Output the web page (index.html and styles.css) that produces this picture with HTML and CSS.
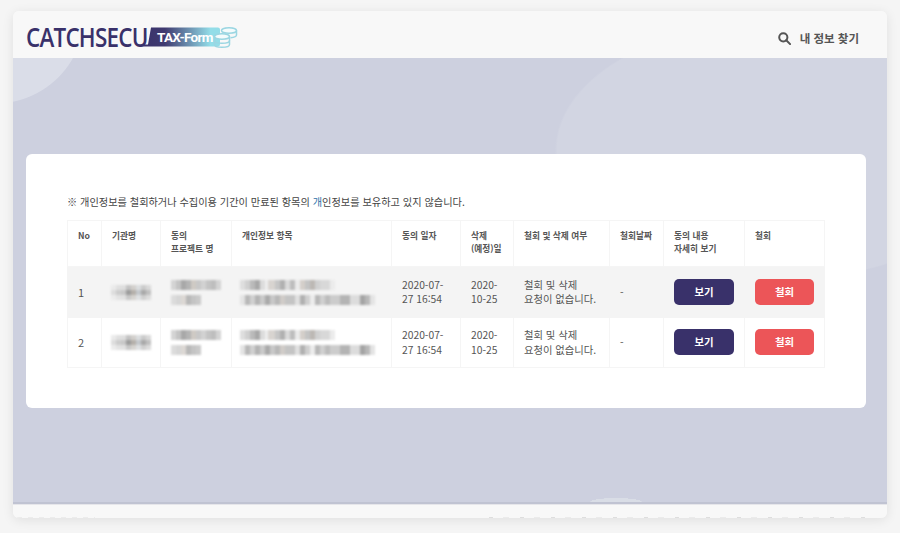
FILE: index.html
```html
<!DOCTYPE html>
<html lang="ko">
<head>
<meta charset="utf-8">
<title>CATCHSECU TAX-Form</title>
<link rel="stylesheet" href="styles.css">
</head>
<body>
<div class="frame">
  <header class="topbar">
    <svg class="logo" width="212" height="21" viewBox="0 0 212 21">
      <defs>
        <linearGradient id="band" x1="0" x2="1" y1="0" y2="0">
          <stop offset="0" stop-color="#39316a"/>
          <stop offset=".3" stop-color="#3f3a70"/>
          <stop offset=".88" stop-color="#93dde8"/>
          <stop offset="1" stop-color="#93dde8"/>
        </linearGradient>
      </defs>
      <path d="M125 0.500h67a2 2 0 0 1 2 2v15a2 2 0 0 1 -2 2h-77v-2h7z" fill="url(#band)"/>
      <text class="logo-word" x="0" y="19.500">CATCHSECU</text>
      <text class="logo-tag" x="131" y="15">TAX-Form</text>
      <g class="coins">
        <ellipse cx="203" cy="3.500" rx="7.500" ry="2.800"/>
        <path d="M210.500 3.500v4.500c0 1.400-2.500 2.500-6 2.800"/>
        <ellipse cx="196" cy="9.500" rx="7.500" ry="2.800"/>
        <path d="M188.500 9.500v8c0 1.600 3.400 2.800 7.500 2.800s7.500-1.200 7.500-2.800v-8"/>
        <path d="M188.500 13.500c0 1.600 3.400 2.800 7.500 2.800s7.500-1.200 7.500-2.800"/>
      </g>
    </svg>
    <a class="find">
      <svg width="13" height="13" viewBox="0 0 13 13" fill="none" stroke="#555" stroke-width="2">
        <circle cx="5.300" cy="5.300" r="4.100"/>
        <path d="M8.300 8.300l3.800 3.800" stroke-linecap="round"/>
      </svg>
      <span>내 정보 찾기</span>
    </a>
  </header>
  <main class="stage">
    <section class="card">
      <p class="notice">※ 개인정보를 철회하거나 수집이용 기간이 만료된 항목의 <span class="hl">개</span>인정보를 보유하고 있지 않습니다.</p>
      <table class="grid">
        <colgroup>
          <col class="c1"><col class="c2"><col class="c3"><col class="c4"><col class="c5"><col class="c6"><col class="c7"><col class="c8"><col class="c9"><col class="c10">
        </colgroup>
        <thead>
          <tr>
            <th>No</th><th>기관명</th><th>동의<br>프로젝트 명</th><th>개인정보 항목</th><th>동의 일자</th><th>삭제<br>(예정)일</th><th>철회 및 삭제 여부</th><th>철회날짜</th><th>동의 내용<br>자세히 보기</th><th>철회</th>
          </tr>
        </thead>
        <tbody>
          <tr class="odd">
            <td class="num">1</td>
            <td><span class="blur b-org"></span></td>
            <td><span class="blur b-pa"></span><span class="blur b-pb"></span></td>
            <td class="items"><span class="blur b-ia"></span><span class="blur b-ib"></span></td>
            <td>2020-07-<br>27 16:54</td>
            <td>2020-<br>10-25</td>
            <td>철회 및 삭제<br>요청이 없습니다.</td>
            <td>-</td>
            <td><button class="btn view">보기</button></td>
            <td><button class="btn revoke">철회</button></td>
          </tr>
          <tr class="even">
            <td class="num">2</td>
            <td><span class="blur b-org"></span></td>
            <td><span class="blur b-pa"></span><span class="blur b-pb"></span></td>
            <td class="items"><span class="blur b-ia"></span><span class="blur b-ib"></span></td>
            <td>2020-07-<br>27 16:54</td>
            <td>2020-<br>10-25</td>
            <td>철회 및 삭제<br>요청이 없습니다.</td>
            <td>-</td>
            <td><button class="btn view">보기</button></td>
            <td><button class="btn revoke">철회</button></td>
          </tr>
        </tbody>
      </table>
    </section>
  </main>
  <footer class="foot">
    <span class="crumb crumb-l"></span>
    <span class="crumb crumb-r"></span>
  </footer>
</div>
</body>
</html>
```
FILE: styles.css
```css
* { box-sizing: border-box; }
html, body { margin: 0; height: 100%; }
body {
  background: #f5f5f5;
  padding: 11px 13px 15px;
  font-family: "Noto Sans CJK KR", "Noto Sans", sans-serif;
  color: #555;
  overflow: hidden;
}
.frame {
  height: 507px;
  display: flex;
  flex-direction: column;
  background: #f8f8f8;
  border-radius: 6px;
  overflow: hidden;
  box-shadow: 0 2px 12px rgba(0, 0, 0, .09);
}
.topbar {
  height: 47px;
  flex: none;
  display: flex;
  align-items: center;
  justify-content: space-between;
  padding: 0 28px 0 13px;
  background: #f8f8f8;
}
.logo { display: block; margin-top: 6px; overflow: visible; }
.logo-word {
  font-family: "Open Sans", sans-serif;
  font-size: 27px;
  font-weight: 600;
  letter-spacing: -.900px;
  fill: #39316a;
  transform: scaleX(.83);
}
.logo-tag {
  font-family: "Roboto", sans-serif;
  font-size: 13.500px;
  font-weight: 700;
  letter-spacing: -.700px;
  fill: #fff;
}
.coins path, .coins ellipse { fill: #f4fbfc; stroke: #9bd6e2; stroke-width: 1.500; }
.coins path { fill: none; }
.find { display: flex; align-items: center; gap: 9px; margin-top: 7px; font-size: 11.500px; font-weight: 700; color: #555; }
.stage {
  flex: 1;
  position: relative;
  padding: 96px 21px 0 13px;
  overflow: hidden;
  background:
    radial-gradient(ellipse 26px 4px at 603px 100%, #d9dde6 98%, transparent 100%),
    radial-gradient(circle 90px at -18px -44px, #dadde8 99%, transparent 100%),
    radial-gradient(ellipse 225px 130px at 767px 92px, #d2d5e2 99%, transparent 100%),
    #cdd0df;
  border-bottom: 2px solid #c0c3d2;
}
.card {
  height: 254px;
  background: #fff;
  border-radius: 6px;
  padding: 40px 41px 0;
}
.notice { margin: 0 0 11px; font-size: 10.200px; line-height: 15px; color: #444; }
.hl { color: #2d6fa8; }
.grid {
  width: 757px;
  table-layout: fixed;
  border-collapse: collapse;
  font-size: 10.300px;
  line-height: 14.500px;
}
.c1 { width: 34px; } .c2 { width: 59px; } .c3 { width: 71px; } .c4 { width: 160px; } .c5 { width: 69px; }
.c6 { width: 53px; } .c7 { width: 96px; } .c8 { width: 54px; } .c9 { width: 81px; } .c10 { width: 80px; }
.grid th, .grid td { border: 1px solid #f5f5f5; padding: 0 10px; text-align: left; }
.grid th { height: 46px; vertical-align: top; padding-top: 9px; font-size: 8.700px; line-height: 12.500px; font-weight: 700; color: #555; }
.grid td { vertical-align: middle; }
.grid .num { font-size: 11px; }
.odd td { height: 51px; background: #f4f4f4; border-color: #f4f4f4; }
.even td { height: 50px; }
.grid .items { padding-left: 8px; }
.blur { display: block; filter: blur(.8px); }
.b-org {
  width: 40px;
  height: 15px;
  margin-left: -1px;
  background:
    linear-gradient(rgba(255, 255, 255, .4) 0 5px, transparent 5px 10px, rgba(255, 255, 255, .45) 10px),
    linear-gradient(90deg, #ddd 0 5px, #ccc 5px 10px, #c8c8c8 10px 15px, #9c9c9c 15px 20px, #b5b0aa 20px 25px, #c4c8cc 25px 30px, #a9a9a9 30px 35px, #c0c0c0 35px);
}
.b-pa {
  width: 50px;
  height: 10px;
  margin-bottom: 5px;
  background: linear-gradient(90deg, #d4d4d4 0 5px, #c4c4c4 5px 10px, #a8a8a8 10px 15px, #b4b4b4 15px 20px, #cfcac4 20px 25px, #c8c8c8 25px 30px, #d2d2d2 30px 35px, #c4c4c4 35px 40px, #bebebe 40px 45px, #d4d4d4 45px);
}
.b-pb {
  width: 30px;
  height: 10px;
  background: linear-gradient(90deg, #dcdcdc 0 5px, #d6d6d6 5px 10px, #dcd8d4 10px 15px, #b8b8b8 15px 20px, #c4c4c4 20px 25px, #cacaca 25px);
}
.b-ia {
  width: 95px;
  height: 10px;
  margin-bottom: 5px;
  background: linear-gradient(90deg, #dedede 0 5px, #d0d0d0 5px 10px, #bababa 10px 15px, #a8a8a8 15px 20px, #dcdcdc 20px 25px, #efefef 25px 28px, #d8d4d0 28px 35px, #c6c6c6 35px 40px, #b0b0b0 40px 45px, #dadada 45px 50px, #bdbdbd 50px 55px, #ebebeb 55px 60px, #d4cfca 60px 65px, #c4c4c4 65px 70px, #bcb8b4 70px 75px, #d0d0d0 75px 80px, #d8d8d8 80px 90px, #ececec 90px);
}
.b-ib {
  width: 135px;
  height: 10px;
  background: linear-gradient(90deg, #e4e4e4 0 5px, #b8b8b8 5px 10px, #d0d0d0 10px 15px, #b4b4b4 15px 20px, #cacaca 20px 25px, #aaa 25px 30px, #c8c8c8 30px 35px, #b8b8b8 35px 40px, #d0ccc8 40px 45px, #c4c4c4 45px 55px, #e0e0e0 55px 60px, #b0b0b0 60px 65px, #cfcfcf 65px 70px, #ececec 70px 75px, #b8b8b8 75px 80px, #d0d0d0 80px 85px, #bcbcbc 85px 90px, #ccc 90px 100px, #b4b4b4 100px 110px, #dcdcdc 110px 120px, #a4a4a4 120px 125px, #b8b8b8 125px 130px, #e4e4e4 130px);
}
.btn {
  display: block;
  width: 60px;
  height: 26px;
  padding: 0;
  border: 0;
  border-radius: 5px;
  color: #fff;
  font: 700 10.400px/26px "Noto Sans CJK KR", sans-serif;
  text-align: center;
}
.even .btn { margin-bottom: 1px; }
.view { background: #39316a; }
.revoke { width: 59px; background: #ec5558; }
.foot {
  height: 14px;
  flex: none;
  display: flex;
  align-items: flex-end;
  justify-content: space-between;
  padding: 0 13px 0 4px;
  background: #f8f8f8;
  box-shadow: inset 0 1px 0 #e6e6ea;
}
.crumb { display: block; height: 1px; opacity: .6; background: repeating-linear-gradient(90deg, #e4e4e4 0 5px, transparent 5px 11px); }
.crumb-l { width: 78px; }
.crumb-r { width: 385px; background: repeating-linear-gradient(90deg, #ccc 0 4px, transparent 4px 14px, #e2e2e2 14px 20px, transparent 20px 31px); }
```
